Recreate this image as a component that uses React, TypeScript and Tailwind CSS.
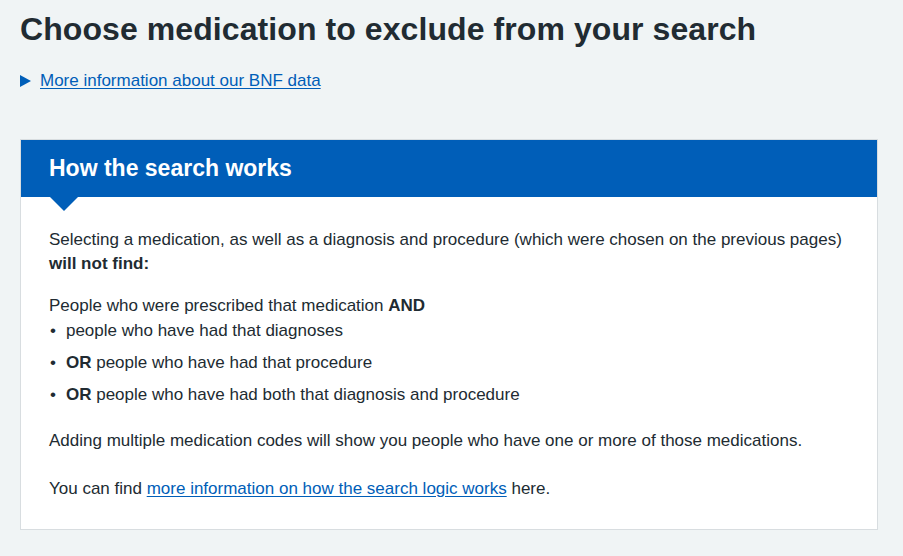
export default function App() {
  return (
    <div
      className="min-h-[556px] bg-[#f0f4f5] px-5 pt-[9px] pb-6 text-[#212b32]"
      style={{ fontFamily: '"Liberation Sans", Arial, sans-serif' }}
    >
      <h1 className="text-[32px] font-bold leading-[40px] tracking-[0.08px]">
        Choose medication to exclude from your search
      </h1>

      <details className="mt-[20px]">
        <summary className="flex cursor-pointer list-none items-center text-[17px] leading-6 text-[#005eb8]">
          <svg width="11" height="12" viewBox="0 0 11 12" className="mr-[9px]">
            <path d="M0 0 L11 6 L0 12 Z" fill="#005eb8" />
          </svg>
          <span className="underline underline-offset-2">
            More information about our BNF data
          </span>
        </summary>
      </details>

      <div className="mt-[46px] w-[858px] border border-[#d8dde0] bg-white">
        <div className="relative bg-[#005eb8] px-[28px] pt-[13px] pb-[14px]">
          <h2 className="text-[23px] font-bold leading-[30px] text-white">
            How the search works
          </h2>
          <svg
            width="28"
            height="14"
            viewBox="0 0 28 14"
            className="absolute left-[29px] top-full"
          >
            <path d="M0 0 L28 0 L14 14 Z" fill="#005eb8" />
          </svg>
        </div>

        <div className="px-[28px] pt-[31px] pb-[28px] text-[17px] leading-[24px]">
          <p>
            Selecting a medication, as well as a diagnosis and procedure (which were chosen on the
            previous pages) <strong>will not find:</strong>
          </p>

          <p className="mt-[18px]">
            People who were prescribed that medication <strong>AND</strong>
          </p>
          <ul className="mt-px">
            <li className="flex items-start">
              <span className="mr-[10px] ml-px">•</span>
              <span>people who have had that diagnoses</span>
            </li>
            <li className="mt-2 flex items-start">
              <span className="mr-[10px] ml-px">•</span>
              <span>
                <strong>OR</strong> people who have had that procedure
              </span>
            </li>
            <li className="mt-2 flex items-start">
              <span className="mr-[10px] ml-px">•</span>
              <span>
                <strong>OR</strong> people who have had both that diagnosis and procedure
              </span>
            </li>
          </ul>

          <p className="mt-[22px]">
            Adding multiple medication codes will show you people who have one or more of those
            medications.
          </p>

          <p className="mt-[24px]">
            You can find{" "}
            <a href="#" className="text-[#005eb8] underline underline-offset-2">
              more information on how the search logic works
            </a>{" "}
            here.
          </p>
        </div>
      </div>
    </div>
  );
}
